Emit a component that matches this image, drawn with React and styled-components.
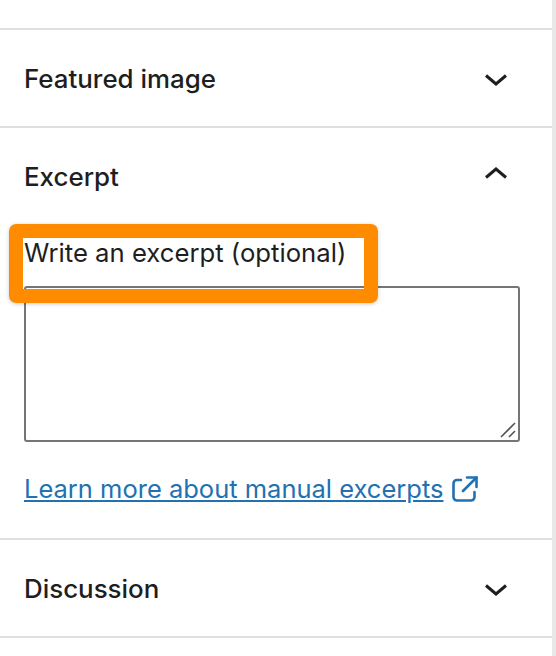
import React from "react";
import styled, { createGlobalStyle } from "styled-components";

const GlobalStyle = createGlobalStyle`
  html, body {
    margin: 0;
    padding: 0;
    background: #fff;
    overflow: hidden;
  }
`;

const Sidebar = styled.div`
  position: relative;
  width: 556px;
  height: 656px;
  box-sizing: border-box;
  padding-top: 28px;
  border-right: 4px solid #e8e8e8;
  background: #fff;
  color: #1e1e1e;
  font-family: Inter, "Liberation Sans", sans-serif;
`;

const PanelList = styled.div`
  display: flex;
  flex-direction: column;
`;

const Panel = styled.section`
  border-top: 2px solid #e0e0e0;
  &:last-child {
    border-bottom: 2px solid #e0e0e0;
  }
`;

const PanelHeader = styled.div`
  height: 96px;
  box-sizing: border-box;
  padding: 0 44px 0 24px;
  display: flex;
  align-items: center;
  justify-content: space-between;
`;

const PanelTitle = styled.div`
  font-size: 25.9px;
  font-weight: 500;
`;

const PanelBody = styled.div`
  padding: 0 32px 34px 24px;
  display: flex;
  flex-direction: column;
`;

const FieldLabel = styled.label`
  font-size: 25.7px;
  line-height: 30px;
  margin-top: 14px;
  margin-bottom: 18px;
`;

const TextBox = styled.div`
  position: relative;
  height: 156px;
  box-sizing: border-box;
  border: 2px solid #757575;
  border-radius: 3px;
`;

const Grip = styled.svg`
  position: absolute;
  right: 1px;
  bottom: 1px;
`;

const LearnMore = styled.a`
  margin-top: 32px;
  display: inline-flex;
  align-items: center;
  gap: 9px;
  font-size: 25.5px;
  line-height: 30px;
  color: #2271b1;
  span {
    text-decoration: underline;
  }
`;

const Highlight = styled.div`
  position: absolute;
  left: 9px;
  top: 224px;
  width: 369px;
  height: 79px;
  box-sizing: border-box;
  border: 14px solid #ff8c00;
  border-radius: 7px;
  box-shadow: 0 1px 4px rgba(0, 0, 0, 0.2);
`;

const Chevron = ({ up }) => (
  <svg width="24" height="24" viewBox="0 0 24 24" fill="none">
    <path
      d={up ? "M2 13.5 12 5l10 8.5" : "M2 9.5l10 8.5 10-8.5"}
      stroke="#1e1e1e"
      strokeWidth="3"
    />
  </svg>
);

const ExternalIcon = () => (
  <svg width="26" height="26" viewBox="0 0 26 26" fill="none" stroke="#2271b1" strokeWidth="2.6" strokeLinecap="round" strokeLinejoin="round">
    <path d="M9 4H5a3.5 3.5 0 0 0-3.5 3.5V21A3.5 3.5 0 0 0 5 24.500h14a3.500 3.500 0 0 0 3.500-3.500v-5" />
    <path d="M11 15 24.500 1.500" />
    <path d="M15 1.500h9.500V11" />
  </svg>
);

const App = () => (
  <>
    <GlobalStyle />
    <Sidebar>
      <PanelList>
        <Panel>
          <PanelHeader>
            <PanelTitle>Featured image</PanelTitle>
            <Chevron />
          </PanelHeader>
        </Panel>
        <Panel>
          <PanelHeader>
            <PanelTitle>Excerpt</PanelTitle>
            <Chevron up />
          </PanelHeader>
          <PanelBody>
            <FieldLabel>Write an excerpt (optional)</FieldLabel>
            <TextBox>
              <Grip width="18" height="18" viewBox="0 0 18 18" fill="none" stroke="#555" strokeWidth="1.6">
                <path d="M2 16 16 2M10 16l6-6" />
              </Grip>
            </TextBox>
            <LearnMore>
              <span>Learn more about manual excerpts</span>
              <ExternalIcon />
            </LearnMore>
          </PanelBody>
        </Panel>
        <Panel>
          <PanelHeader>
            <PanelTitle>Discussion</PanelTitle>
            <Chevron />
          </PanelHeader>
        </Panel>
      </PanelList>
      <Highlight />
    </Sidebar>
  </>
);

export default App;
